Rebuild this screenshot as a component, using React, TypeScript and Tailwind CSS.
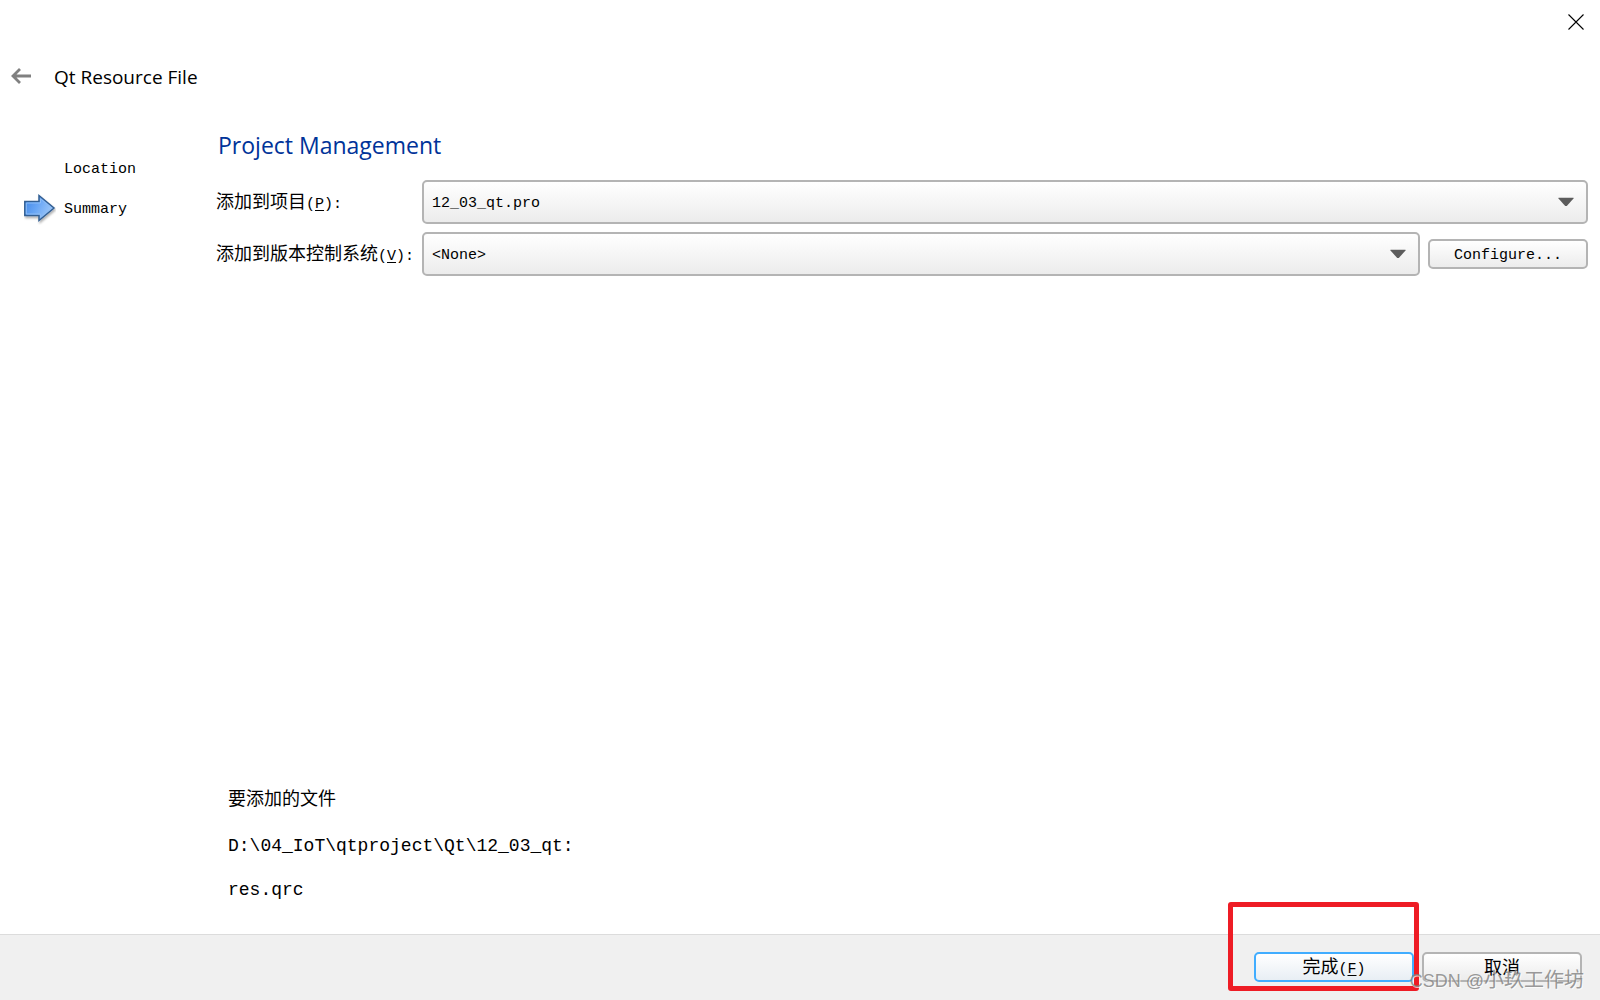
import { useState } from "react";
import type { ReactNode } from "react";

const steps = ["Location", "Summary"];

const buttonBase =
  "flex h-[30px] w-40 items-center justify-center rounded-[5px] border-2 bg-linear-to-b pt-1 text-black";

function CloseIcon() {
  return (
    <svg className="size-4" viewBox="0 0 16 16" fill="none" stroke="#000" strokeWidth="1.1" aria-hidden="true">
      <path d="M0.5 0.5L15.5 15.5M15.5 0.5L0.5 15.5" />
    </svg>
  );
}

function BackIcon() {
  return (
    <svg className="h-4 w-5" viewBox="0 0 20 16" fill="none" stroke="#808080" strokeWidth="2.8" aria-hidden="true">
      <path d="M2 8H20M9 1L2 8L9 15" />
    </svg>
  );
}

function CurrentStepIcon() {
  return (
    <svg className="h-8 w-8" viewBox="0 0 32 32" aria-hidden="true">
      <defs>
        <linearGradient id="step-fill" x1="0" y1="0" x2="1" y2="0.4">
          <stop offset="0" stopColor="#3f86e6" />
          <stop offset="0.5" stopColor="#67a5f5" />
          <stop offset="1" stopColor="#9cc6f8" />
        </linearGradient>
        <filter id="step-shadow" x="-20%" y="-20%" width="150%" height="150%">
          <feDropShadow dx="1" dy="2" stdDeviation="1" floodColor="#000" floodOpacity="0.3" />
        </filter>
      </defs>
      <path
        d="M0.8 8.5H15V2.5L30 15L15 27.5V22.5H0.8Z"
        fill="url(#step-fill)"
        stroke="#335f93"
        strokeWidth="1.5"
        filter="url(#step-shadow)"
      />
      <path d="M2.3 10H16.5V5.8L27.7 15L16.5 24.2V21H2.3Z" fill="none" stroke="#8dbcf5" strokeWidth="1" />
    </svg>
  );
}

function Mnemonic({ text, letter, suffix = "" }: { text: string; letter: string; suffix?: string }) {
  return (
    <span className="whitespace-pre text-[18px] leading-6">
      {text}
      <span className="text-[15px]">
        (<span className="underline underline-offset-2">{letter}</span>){suffix}
      </span>
    </span>
  );
}

function ComboBox({ id, options }: { id: string; options: string[] }) {
  return (
    <div className="relative min-w-0 flex-1">
      <select
        id={id}
        className="block h-11 w-full appearance-none rounded-[5px] border-2 border-[#b4b4b4] bg-linear-to-b from-white to-[#ececec] pt-1 pr-10 pl-2 text-[15px] text-black"
      >
        {options.map((option) => (
          <option key={option}>{option}</option>
        ))}
      </select>
      <svg
        className="pointer-events-none absolute top-1/2 right-[14px] h-[9px] w-4 -translate-y-1/2"
        viewBox="0 0 16 9"
        aria-hidden="true"
      >
        <path d="M0.5 0H15.5V1L8.8 8.5H7.2L0.5 1Z" fill="#5c5c5c" />
      </svg>
    </div>
  );
}

function FormRow({ id, label, children }: { id: string; label: ReactNode; children: ReactNode }) {
  return (
    <div className="flex items-center">
      <label htmlFor={id} className="w-[206px] shrink-0 pt-1">
        {label}
      </label>
      <div className="flex min-w-0 flex-1 items-center gap-2">{children}</div>
    </div>
  );
}

export default function App() {
  const [currentStep] = useState(1);

  return (
    <div className="relative flex min-h-screen flex-col bg-white font-['Liberation_Mono','Noto_Sans_CJK_SC',monospace] text-black">
      <div className="flex h-11 items-center justify-end px-4">
        <button type="button" aria-label="Close">
          <CloseIcon />
        </button>
      </div>

      <header className="flex h-16 items-center gap-[23px] px-[11px]">
        <button type="button" aria-label="Back">
          <BackIcon />
        </button>
        <h1 className="pt-[2px] font-['Open_Sans',sans-serif] text-[19px] leading-6">Qt Resource File</h1>
      </header>

      <div className="flex flex-1 pt-5 pr-3">
        <nav className="w-[216px] shrink-0 pt-[21px]" aria-label="Steps">
          <ol>
            {steps.map((step, i) => (
              <li
                key={step}
                aria-current={i === currentStep ? "step" : undefined}
                className="flex h-10 items-center gap-2 pl-6 text-[15px]"
              >
                <span className="flex size-8 items-center">{i === currentStep && <CurrentStepIcon />}</span>
                <span className="pt-[2px]">{step}</span>
              </li>
            ))}
          </ol>
        </nav>

        <main className="flex min-w-0 flex-1 flex-col">
          <h2 className="mb-[18px] pl-[2px] font-['Open_Sans',sans-serif] text-[23px] leading-[34px] text-[#003399]">
            Project Management
          </h2>
          <div className="flex flex-col gap-2">
            <FormRow id="project" label={<Mnemonic text="添加到项目" letter="P" suffix=":" />}>
              <ComboBox id="project" options={["12_03_qt.pro"]} />
            </FormRow>
            <FormRow id="vcs" label={<Mnemonic text="添加到版本控制系统" letter="V" suffix=":" />}>
              <ComboBox id="vcs" options={["<None>"]} />
              <button type="button" className={`${buttonBase} border-[#b4b4b4] from-white to-[#ececec] text-[15px]`}>
                Configure...
              </button>
            </FormRow>
          </div>

          <section className="mt-auto flex flex-col gap-[22px] pb-8 pl-3 text-[18px] leading-6">
            <p>要添加的文件</p>
            <div className="flex flex-col gap-5">
              <p>D:\04_IoT\qtproject\Qt\12_03_qt:</p>
              <p>res.qrc</p>
            </div>
          </section>
        </main>
      </div>

      <footer className="flex h-[66px] items-start justify-end gap-2 border-t border-[#dcdcdc] bg-[#f0f0f0] pt-[17px] pr-[18px]">
        <div className="relative">
          <button type="button" className={`${buttonBase} border-[#41adff] from-white to-[#e8eef4]`}>
            <Mnemonic text="完成" letter="F" />
          </button>
          <div className="pointer-events-none absolute -top-[50px] -right-[5px] -bottom-[9px] -left-[26px] rounded-[3px] border-5 border-[#ee1c25]" />
        </div>
        <button type="button" className={`${buttonBase} border-[#b4b4b4] from-white to-[#ececec] text-[18px]`}>
          取消
        </button>
      </footer>

      <div className="pointer-events-none absolute right-4 bottom-1 font-['Liberation_Sans','Noto_Sans_CJK_SC',sans-serif] text-[20px] leading-[30px] text-[#808080]/80 [text-shadow:1px_1px_0_#ffffffb0]">
        <span className="text-[18px]">CSDN @</span>小玖工作坊
      </div>
    </div>
  );
}
